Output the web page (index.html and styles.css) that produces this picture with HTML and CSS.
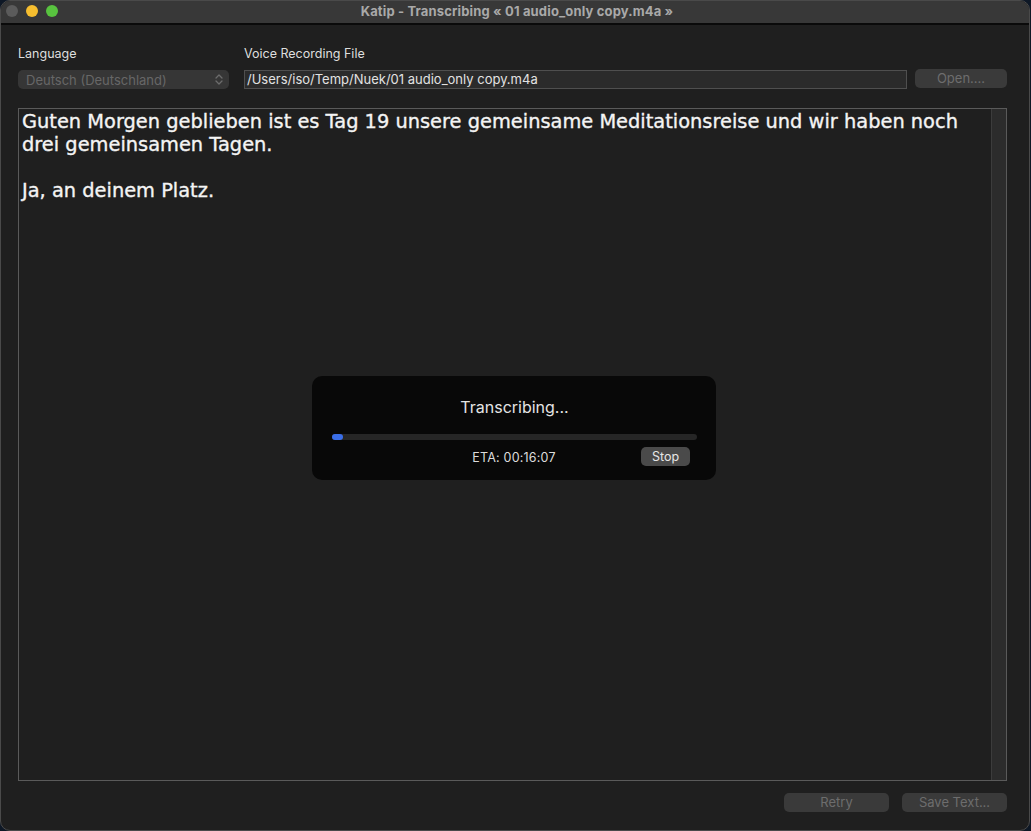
FILE: index.html
```html
<!DOCTYPE html>
<html>
<head>
<meta charset="utf-8">
<link rel="stylesheet" href="styles.css">
</head>
<body>
<div class="window">
  <div class="titlebar">
    <div class="lights">
      <span class="light close"></span>
      <span class="light min"></span>
      <span class="light max"></span>
    </div>
    <div class="title">Katip - Transcribing « 01 audio_only copy.m4a »</div>
  </div>
  <div class="content">
    <div class="top">
      <div class="col lang">
        <div class="label">Language</div>
        <div class="popup">
          <span>Deutsch (Deutschland)</span>
          <svg class="chev" width="8" height="11" viewBox="0 0 8 11"><path d="M1 4 L4 1 L7 4 M1 7 L4 10 L7 7" fill="none" stroke="#6c6c6c" stroke-width="1.3" stroke-linecap="round" stroke-linejoin="round"/></svg>
        </div>
      </div>
      <div class="col file">
        <div class="label">Voice Recording File</div>
        <div class="fileline">
          <div class="field">/Users/iso/Temp/Nuek/01 audio_only copy.m4a</div>
          <div class="btn open">Open....</div>
        </div>
      </div>
    </div>
    <div class="textarea">
      <div class="text">
        <p>Guten Morgen geblieben ist es Tag 19 unsere gemeinsame Meditationsreise und wir haben noch drei gemeinsamen Tagen.</p>
        <p>Ja, an deinem Platz.</p>
      </div>
      <div class="scroll"></div>
      <div class="overlay">
        <div class="otitle">Transcribing...</div>
        <div class="track"><div class="fill"></div></div>
        <div class="orow">
          <span class="eta">ETA: 00:16:07</span>
          <span class="stop">Stop</span>
        </div>
      </div>
    </div>
    <div class="bottom">
      <div class="btn wide">Retry</div>
      <div class="btn wide">Save Text...</div>
    </div>
  </div>
</div>
</body>
</html>
```
FILE: styles.css
```css
html, body {
  margin: 0;
  padding: 0;
  background: #0e1826;
  width: 1031px;
  height: 831px;
  overflow: hidden;
}
.window {
  background: #1f1f1f;
  border: 1px solid #4a4a4a;
  border-radius: 10px;
  overflow: hidden;
  box-sizing: border-box;
  width: 1030px;
  height: 831px;
  font-family: Inter, "Noto Sans", sans-serif;
  display: flex;
  flex-direction: column;
}
.titlebar {
  height: 22px;
  background: #383838;
  border-bottom: 2px solid #0a0a0a;
  position: relative;
  display: flex;
  align-items: center;
  justify-content: center;
  flex-shrink: 0;
}
.lights {
  position: absolute;
  left: 5px;
  top: 4px;
  display: flex;
  gap: 8px;
}
.light {
  width: 12px;
  height: 12px;
  border-radius: 50%;
  display: block;
}
.close { background: #5b5b5b; }
.min { background: #f6be2f; }
.max { background: #58c33f; }
.title {
  color: #a9a9a9;
  font-size: 13px;
  font-weight: 700;
  letter-spacing: 0.15px;
  margin-top: -2px;
  margin-left: 4px;
}
.content {
  padding: 20px 22px 0 17px;
  flex: 1;
  display: flex;
  flex-direction: column;
}
.top {
  display: flex;
  gap: 15px;
}
.label {
  color: #dedede;
  font-size: 12.5px;
  height: 17px;
  line-height: 17px;
  margin-bottom: 8px;
}
.lang { width: 211px; }
.file { flex: 1; }
.popup {
  height: 19px;
  background: #363636;
  border-radius: 5px;
  display: flex;
  align-items: center;
  justify-content: space-between;
  padding: 0 6px 0 8px;
  color: #676767;
  font-size: 13px;
}
.chev { display: block; }
.fileline {
  display: flex;
  gap: 8px;
}
.field {
  flex: 1;
  height: 19px;
  box-sizing: border-box;
  border: 1px solid #4f4f4f;
  background: #2b2b2b;
  color: #e2e2e2;
  font-size: 13px;
  line-height: 17px;
  padding-left: 2px;
}
.btn {
  background: #3a3a3a;
  border-radius: 5px;
  color: #6d6d6d;
  font-size: 13px;
  height: 19px;
  line-height: 19px;
  text-align: center;
}
.open {
  width: 92px;
  margin-top: -1px;
}
.textarea {
  margin-top: 19px;
  height: 673px;
  box-sizing: border-box;
  border: 1px solid #5a5a5a;
  position: relative;
  display: flex;
}
.text {
  flex: 1;
  padding: 1px 3px 0;
  color: #f4f4f4;
  font-family: "DejaVu Sans", sans-serif;
  font-size: 19.4px;
  line-height: 23px;
  -webkit-text-stroke: 0.35px #f4f4f4;
}
.text p { margin: 0 0 23px 0; }
.scroll {
  width: 14px;
  background: #2c2c2c;
  border-left: 1px solid #3c3c3c;
}
.overlay {
  position: absolute;
  left: 293px;
  top: 267px;
  width: 404px;
  height: 104px;
  background: #080808;
  border-radius: 10px;
  box-sizing: border-box;
  padding: 21px 19px 0 20px;
}
.otitle {
  text-align: center;
  color: #e4e4e4;
  font-size: 16px;
  height: 21px;
  line-height: 21px;
}
.track {
  margin-top: 16px;
  height: 6px;
  border-radius: 3px;
  background: #262626;
}
.fill {
  width: 11px;
  height: 6px;
  border-radius: 3px;
  background: #3a6ee9;
}
.orow {
  position: relative;
  height: 20px;
  margin-top: 7px;
  display: flex;
  justify-content: center;
  align-items: center;
}
.eta {
  color: #dcdcdc;
  font-size: 12.5px;
  letter-spacing: 0.2px;
  margin-left: -1px;
}
.stop {
  position: absolute;
  right: 7px;
  top: 0;
  width: 49px;
  height: 19px;
  line-height: 19px;
  background: #4a4a4a;
  border-radius: 5px;
  color: #e6e6e6;
  font-size: 12.5px;
  text-align: center;
}
.bottom {
  display: flex;
  justify-content: flex-end;
  gap: 13px;
  margin-top: 12px;
}
.wide { width: 105px; }
```
